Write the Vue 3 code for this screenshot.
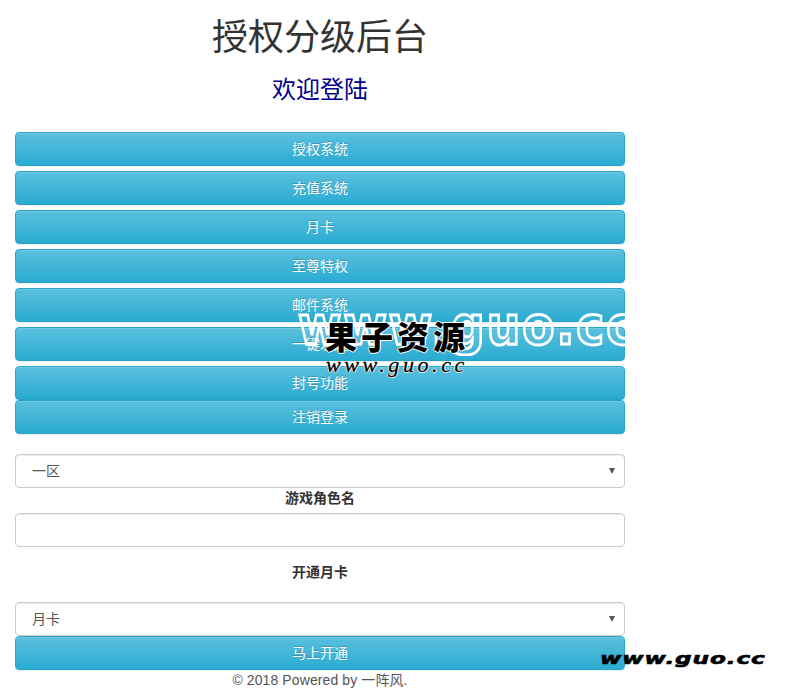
<script setup>
const nav = ['授权系统', '充值系统', '月卡', '至尊特权', '邮件系统', '一键发送', '封号功能']
</script>

<template>
  <div class="page">
    <main class="panel">
      <h1 class="title">授权分级后台</h1>
      <h3 class="welcome">欢迎登陆</h3>
      <nav class="nav">
        <button v-for="item in nav" :key="item" class="btn" type="button">{{ item }}</button>
      </nav>
      <button class="btn logout" type="button">注销登录</button>
      <div class="select first">
        <span>一区</span>
      </div>
      <label class="label role">游戏角色名</label>
      <input class="input" type="text" />
      <label class="label card">开通月卡</label>
      <div class="select">
        <span>月卡</span>
      </div>
      <button class="btn submit" type="button">马上开通</button>
      <footer class="footer">© 2018 Powered by 一阵风.</footer>
    </main>

    <div class="wm-clip"><span class="wm-big">www.guo.cc</span></div>
    <div class="wm-logo">果子资源</div>
    <div class="wm-url">www.guo.cc</div>
    <div class="wm-corner">www.guo.cc</div>
  </div>
</template>

<style>
html, body { margin: 0; background: #fff; }
</style>

<style scoped>
.page {
  position: relative;
  width: 795px;
  height: 691px;
  overflow: hidden;
  font-family: "Liberation Sans", "Noto Sans CJK SC", sans-serif;
  font-size: 14px;
  color: #333;
}
.panel {
  width: 610px;
  margin-left: 15px;
  display: flex;
  flex-direction: column;
  align-items: stretch;
}
.title {
  margin: 18px 0 0;
  font-size: 36px;
  line-height: 40px;
  font-weight: 400;
  text-align: center;
}
.welcome {
  margin: 18px 0 0;
  font-size: 24px;
  line-height: 28px;
  font-weight: 400;
  color: #00008b;
  text-align: center;
}
.nav {
  margin-top: 28px;
  display: flex;
  flex-direction: column;
  gap: 5px;
}
.btn {
  display: block;
  width: 100%;
  height: 34px;
  padding: 0;
  border: 1px solid #28a4c9;
  border-radius: 4px;
  background: linear-gradient(#5bc0de, #2aabd2);
  box-shadow: inset 0 1px 0 rgba(255, 255, 255, .15), 0 1px 1px rgba(0, 0, 0, .075);
  color: #fff;
  font: inherit;
  line-height: 32px;
  text-align: center;
  text-shadow: 0 -1px 0 rgba(0, 0, 0, .2);
}
.select {
  position: relative;
  box-sizing: border-box;
  height: 34px;
  padding-left: 16px;
  border: 1px solid #ccc;
  border-radius: 4px;
  background: #fff;
  box-shadow: inset 0 1px 1px rgba(0, 0, 0, .075);
  color: #555;
  line-height: 32px;
}
.select::after {
  content: "";
  position: absolute;
  right: 9px;
  top: 13px;
  border-left: 3px solid transparent;
  border-right: 3px solid transparent;
  border-top: 6px solid #555;
}
.first { margin-top: 20px; }
.label {
  display: block;
  font-weight: 700;
  line-height: 20px;
  text-align: center;
}
.role { margin-top: 0; }
.input {
  box-sizing: border-box;
  display: block;
  width: 100%;
  height: 34px;
  margin: 5px 0 0;
  border: 1px solid #ccc;
  border-radius: 4px;
  background: #fff;
  box-shadow: inset 0 1px 1px rgba(0, 0, 0, .075);
}
.card { margin: 15px 0 20px; }
.footer {
  margin-top: 0;
  line-height: 20px;
  letter-spacing: .1px;
  color: #555;
  text-align: center;
}

.wm-clip {
  position: absolute;
  left: 298px;
  top: 296px;
  width: 327px;
  height: 60px;
  overflow: hidden;
}
.wm-big {
  display: block;
  white-space: nowrap;
  font-family: "DejaVu Sans", sans-serif;
  font-size: 47px;
  line-height: 60px;
  font-weight: 700;
  letter-spacing: 2px;
  color: rgba(255, 255, 255, .06);
  -webkit-text-stroke: 2.5px #fff;
  transform: scaleY(1.15);
  transform-origin: 0 32px;
}
.wm-logo {
  position: absolute;
  left: 325px;
  top: 315px;
  font-family: "Noto Sans CJK SC", sans-serif;
  font-size: 32px;
  line-height: 40px;
  font-weight: 900;
  letter-spacing: 4px;
  white-space: nowrap;
  color: #000;
  text-shadow: 1px 0 0 #fff, -1px 0 0 #fff, 0 1px 0 #fff, 0 -1px 0 #fff;
}
.wm-url {
  position: absolute;
  left: 326px;
  top: 353px;
  font-family: "Liberation Serif", serif;
  font-style: italic;
  font-size: 22px;
  line-height: 24px;
  letter-spacing: 3.6px;
  white-space: nowrap;
  color: #000;
  -webkit-text-stroke: .3px #000;
  text-shadow: 1px 0 0 #fff, -1px 0 0 #fff, 0 1px 0 #fff, 0 -1px 0 #fff;
}
.wm-corner {
  position: absolute;
  left: 600px;
  top: 649px;
  font-family: "DejaVu Sans", sans-serif;
  font-style: italic;
  font-weight: 700;
  font-size: 16px;
  line-height: 20px;
  letter-spacing: .6px;
  white-space: nowrap;
  color: #000;
  -webkit-text-stroke: .6px #000;
  transform: scaleX(1.45);
  transform-origin: 0 50%;
}
</style>
